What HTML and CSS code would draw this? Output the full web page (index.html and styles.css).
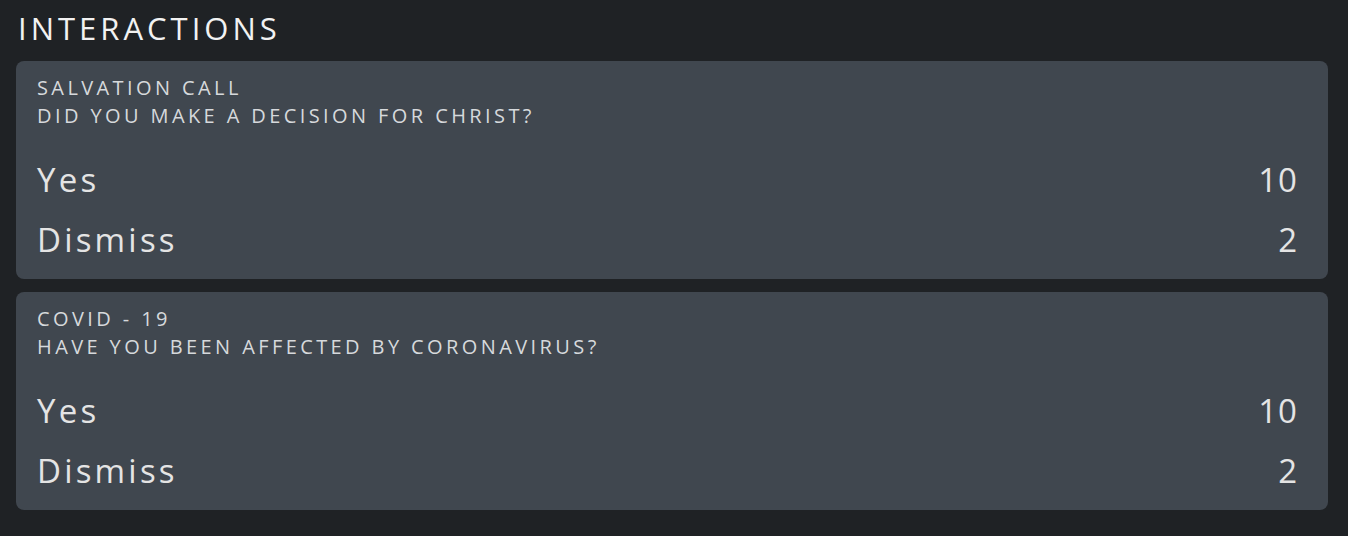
FILE: index.html
```html
<!DOCTYPE html>
<html>
<head>
    <title>Interactions</title>
    <link rel="stylesheet" href="styles.css">
</head>
<body>

<p class="page-title">INTERACTIONS</p>

<div class="card">
    <div class="card-head">
        <p>SALVATION CALL</p>
        <p>DID YOU MAKE A DECISION FOR CHRIST?</p>
    </div>
    <div class="row"><span>Yes</span><span class="count">10</span></div>
    <div class="row"><span>Dismiss</span><span class="count">2</span></div>
</div>

<div class="card">
    <div class="card-head">
        <p>COVID - 19</p>
        <p>HAVE YOU BEEN AFFECTED BY CORONAVIRUS?</p>
    </div>
    <div class="row"><span>Yes</span><span class="count">10</span></div>
    <div class="row"><span>Dismiss</span><span class="count">2</span></div>
</div>

</body>
</html>
```

FILE: styles.css
```css
body{
    margin: 0;
    padding: 8px 20px 0 16px;
    background-color: #1f2225;
    font-family: "Open Sans", sans-serif;
    color: #e4e4e4;
}

p{
    margin: 0;
}

.page-title{
    font-size: 31px;
    letter-spacing: 4px;
    line-height: 40px;
    padding-left: 2px;
    margin-bottom: 13px;
    color: #f2f2f2;
}

.card{
    background-color: #40474f;
    border-radius: 8px;
    padding: 13px 30px 9px 21px;
    margin-bottom: 13px;
}

.card-head p{
    font-size: 20px;
    line-height: 28px;
    letter-spacing: 3.4px;
    color: #d6d9dc;
}

.card-head{
    margin-bottom: 20px;
}

.row{
    display: flex;
    justify-content: space-between;
    font-size: 33px;
    line-height: 60px;
    letter-spacing: 3.2px;
    font-weight: 500;
}

.count{
    letter-spacing: 1px;
}
```
